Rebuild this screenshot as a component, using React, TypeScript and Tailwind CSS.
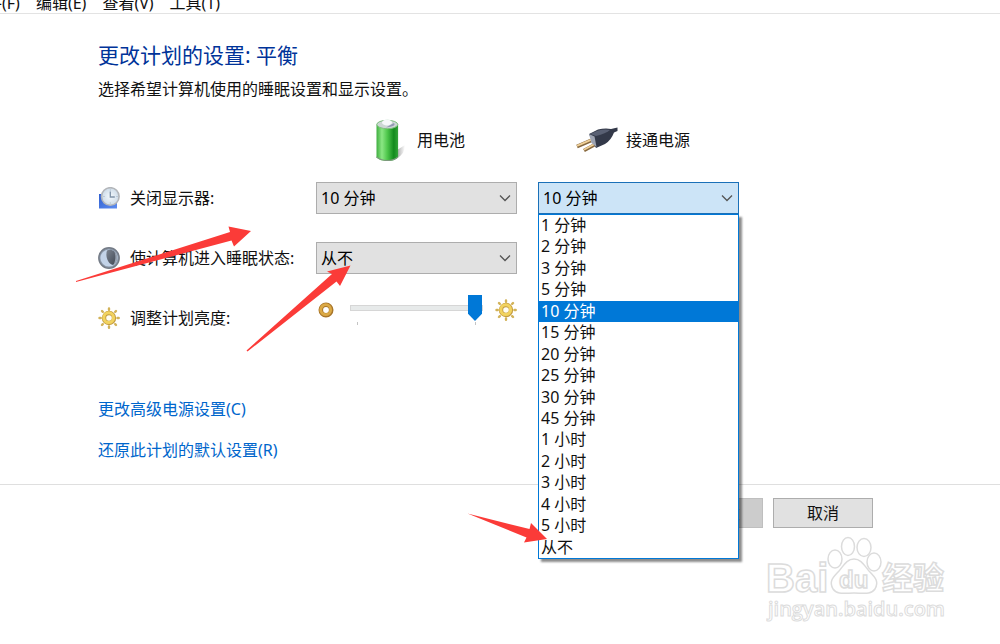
import { useState } from "react";

const TIMEOUTS = [
  "1 分钟",
  "2 分钟",
  "3 分钟",
  "5 分钟",
  "10 分钟",
  "15 分钟",
  "20 分钟",
  "25 分钟",
  "30 分钟",
  "45 分钟",
  "1 小时",
  "2 小时",
  "3 小时",
  "4 小时",
  "5 小时",
  "从不",
];

const MENUS = ["文件(F)", "编辑(E)", "查看(V)", "工具(T)"];

function ClockIcon() {
  return (
    <svg viewBox="0 0 22 22" className="size-[22px] shrink-0" aria-hidden="true">
      <defs>
        <linearGradient id="screen" x1="0" y1="0" x2="1" y2="1">
          <stop offset="0" stopColor="#2f5fd0" />
          <stop offset="1" stopColor="#5d8df0" />
        </linearGradient>
        <radialGradient id="dial">
          <stop offset="0" stopColor="#f4f9fc" />
          <stop offset="1" stopColor="#cddbe8" />
        </radialGradient>
      </defs>
      <path d="M1 7h18v14.500H1z" fill="url(#screen)" />
      <circle cx="12.300" cy="9.500" r="8.800" fill="url(#dial)" stroke="#b3b6ba" strokeWidth="1.600" />
      <path d="M12.300 4.500v5.500h4.500" fill="none" stroke="#8093a8" strokeWidth="1.300" />
      <path d="M12.300 2.500v1M12.300 15.500v1M5.500 9.500h1M18.500 9.500h1" stroke="#a3b3c4" />
    </svg>
  );
}

function MoonIcon() {
  return (
    <svg viewBox="0 0 22 22" className="size-[22px] shrink-0" aria-hidden="true">
      <defs>
        <linearGradient id="night" x1="0" y1="0" x2="1" y2="1">
          <stop offset="0" stopColor="#7c8490" />
          <stop offset="1" stopColor="#3f4652" />
        </linearGradient>
      </defs>
      <circle cx="11" cy="11" r="10.200" fill="#8b98a9" stroke="#747b86" strokeWidth="1.400" />
      <circle cx="11" cy="11" r="8.600" fill="#c3d3e8" />
      <path d="M9 3.500c4-2 8.500.500 9.500 5 .800 4-1 7.500-3.500 9.500C10 17 7 9.500 9 3.500z" fill="url(#night)" />
      <path d="M16.500 5a8 8 0 0 1-1 13c2-4 2.500-9 1-13z" fill="#98a2b0" />
    </svg>
  );
}

function SunIcon() {
  return (
    <svg viewBox="0 0 22 22" className="size-[22px] shrink-0" aria-hidden="true">
      <g stroke="#d2b258" strokeWidth="2.400" strokeLinecap="round">
        <path d="M11 1.500v1.200M11 19.500v1.200M1.500 11h1.200M19.500 11h1.200" />
        <path d="M4 4l.800.800M17.200 17.200l.800.800M4 18l.800-.800M17.200 4.800l.800-.800" />
      </g>
      <circle cx="11" cy="11" r="5" fill="#fffdf2" stroke="#c49d42" strokeWidth="4.400" />
      <circle cx="10.700" cy="10.700" r="4.900" fill="none" stroke="#f2d35f" strokeWidth="3" />
    </svg>
  );
}

function DimIcon() {
  return (
    <svg viewBox="0 0 16 16" className="size-4 shrink-0" aria-hidden="true">
      <circle cx="8" cy="8" r="5.200" fill="#fff" stroke="#a8752a" strokeWidth="4.600" />
      <circle cx="7.700" cy="7.700" r="5" fill="none" stroke="#dba945" strokeWidth="2.800" />
    </svg>
  );
}

function BatteryIcon() {
  return (
    <svg viewBox="0 0 30 42" className="h-[42px] w-[30px] shrink-0" aria-hidden="true">
      <defs>
        <linearGradient id="cell" x1="0" x2="1">
          <stop offset="0" stopColor="#3fae3f" />
          <stop offset=".25" stopColor="#8be784" />
          <stop offset=".5" stopColor="#4fc74c" />
          <stop offset=".8" stopColor="#128a1c" />
          <stop offset="1" stopColor="#35a53a" />
        </linearGradient>
        <linearGradient id="shade" x1="0" x2="1">
          <stop offset="0" stopColor="#888" />
          <stop offset="1" stopColor="#fff" />
        </linearGradient>
      </defs>
      <path d="M22 31l8-5q0 9-8 13z" fill="url(#shade)" opacity=".7" />
      <path d="M1.500 5.500v33q4 3.500 10.800 3.500t10.800-3.500v-33z" fill="url(#cell)" />
      <path d="M1.500 38q4 3.500 10.800 3.500T23 38" fill="none" stroke="#7d9a7d" strokeWidth="1.200" />
      <ellipse cx="12.300" cy="5.500" rx="10.500" ry="4.200" fill="#ccd6d4" stroke="#7fbf7f" />
      <ellipse cx="12" cy="3.500" rx="5" ry="3" fill="#f6f8fa" />
      <path d="M11 8.500l8-4.500q3 3-8 4.500z" fill="#9298b4" />
    </svg>
  );
}

function PlugIcon() {
  return (
    <svg viewBox="0 0 42 26" className="h-[26px] w-[42px] shrink-0" aria-hidden="true">
      <path d="M1 19.500l14-6M8 23.500l12-6.500" stroke="#86683f" strokeWidth="3.600" />
      <path d="M1 18.800l14-6M8 22.800l12-6.500" stroke="#efcf97" strokeWidth="1.800" />
      <path d="M13 7l9-4.500q7-1.500 13-.500l6.500-1.500v3.500l-3.500 1.500q-3 8-9 11.500l-9 4q-4-7-7-14z" fill="#333949" />
      <path d="M13 7l5.500 2.500 2 10.500-5-4z" fill="#9da3b1" />
      <path d="M14 7l8-3.500q7-1.500 12-.500-4 3.500-14 6z" fill="#596073" />
    </svg>
  );
}

function Chevron() {
  return (
    <svg viewBox="0 0 12 8" className="pointer-events-none absolute top-3 right-[6px] h-2 w-3" aria-hidden="true">
      <path d="M1 1.500l5 5 5-5" fill="none" stroke="#555" strokeWidth="1.300" />
    </svg>
  );
}

function TimeoutSelect({ label, value }: { label: string; value: string }) {
  return (
    <div className="relative">
      <select
        aria-label={label}
        defaultValue={value}
        className="h-8 w-full appearance-none border border-[#adadad] bg-[#e1e1e1] px-1 text-black outline-none"
      >
        {TIMEOUTS.map((item) => (
          <option key={item}>{item}</option>
        ))}
      </select>
      <Chevron />
    </div>
  );
}

function OpenTimeoutSelect({ label }: { label: string }) {
  const [open, setOpen] = useState(true);
  const [value, setValue] = useState("10 分钟");

  return (
    <div className="relative">
      <select
        aria-label={label}
        value={value}
        onChange={(event) => setValue(event.target.value)}
        onMouseDown={(event) => {
          event.preventDefault();
          setOpen(!open);
        }}
        className="h-8 w-full appearance-none border border-[#1a70b8] bg-[#cce4f7] px-1 text-black outline-none"
      >
        {TIMEOUTS.map((item) => (
          <option key={item}>{item}</option>
        ))}
      </select>
      <Chevron />
      {open && (
        <ul
          role="listbox"
          aria-label={label}
          className="absolute top-8 left-0 z-10 grid h-[345px] w-full auto-rows-fr border border-[#0078d7] bg-white shadow-[3px_3px_2px_rgba(0,0,0,0.45)]"
        >
          {TIMEOUTS.map((item) => (
            <li
              key={item}
              role="option"
              aria-selected={item === value}
              onClick={() => {
                setValue(item);
                setOpen(false);
              }}
              className={
                item === value
                  ? "bg-[#0078d7] px-[2px] leading-[21px] text-white"
                  : "px-[2px] leading-[21px]"
              }
            >
              {item}
            </li>
          ))}
        </ul>
      )}
    </div>
  );
}

function BrightnessSlider() {
  return (
    <div className="flex h-8 items-center pb-4 pl-[2px]">
      <DimIcon />
      <div className="mr-3 ml-4 w-[133px] shrink-0">
        <input
          id="brightness"
          type="range"
          min={0}
          max={100}
          defaultValue={100}
          className="block h-[26px] w-full appearance-none bg-transparent [&::-webkit-slider-runnable-track]:h-[6px] [&::-webkit-slider-runnable-track]:border [&::-webkit-slider-runnable-track]:border-[#d6d6d6] [&::-webkit-slider-runnable-track]:bg-[#e7eaea] [&::-webkit-slider-thumb]:-mt-[11px] [&::-webkit-slider-thumb]:h-[26px] [&::-webkit-slider-thumb]:w-[14px] [&::-webkit-slider-thumb]:appearance-none [&::-webkit-slider-thumb]:bg-[#0078d7] [&::-webkit-slider-thumb]:[clip-path:polygon(0_0,100%_0,100%_72%,50%_100%,0_72%)]"
        />
        <div className="mt-px flex justify-between px-[7px]">
          <span className="h-[3px] w-px bg-[#c4c4c4]" />
          <span className="h-[3px] w-px bg-[#c4c4c4]" />
        </div>
      </div>
      <SunIcon />
    </div>
  );
}

function Watermark() {
  return (
    <svg
      viewBox="0 0 184 90"
      className="pointer-events-none absolute top-[50px] right-[50px] h-[90px] w-[184px]"
      fill="#fff"
      stroke="#dcdcdc"
      strokeWidth="1.500"
    >
      <text x="0" y="57" fontSize="40" fontWeight="700" fontFamily="Liberation Sans, sans-serif">
        Bai
      </text>
      <text x="116" y="54" fontSize="31" fontWeight="700" fontFamily="Noto Sans CJK SC, sans-serif">
        经验
      </text>
      <ellipse cx="69" cy="24" rx="7" ry="9" />
      <ellipse cx="82" cy="11.500" rx="6.500" ry="9" />
      <ellipse cx="98" cy="12.500" rx="7" ry="9" />
      <ellipse cx="108" cy="27" rx="7" ry="9" />
      <path d="M88 24c-7 0-10 6-15 12-7 7-10 11-6 18 4 6 12 4 21 4s17 2 21-4c4-7 1-11-6-18-5-6-8-12-15-12z" />
      <text x="73" y="53" fontSize="24" fontWeight="700" fontFamily="Liberation Sans, sans-serif">
        du
      </text>
      <text x="2" y="81" fontSize="20" fontWeight="600" fontFamily="Open Sans, sans-serif" strokeWidth="1">
        jingyan.baidu.com
      </text>
    </svg>
  );
}

function Arrows() {
  return (
    <svg
      viewBox="0 0 1000 644"
      className="pointer-events-none absolute top-0 left-0 z-20 h-[644px] w-[1000px]"
      fill="#fb3b38"
      aria-hidden="true"
    >
      <path d="M76 281L230 232 228.500 226.500 251 231 234 246.500 231.500 240.500 76 282z" />
      <path d="M246.500 350.500L332 274 327 271.500 350.500 265.500 340 286 336.500 281.500 247.500 351.500z" />
      <path d="M467.500 513.500L529.500 529 531 523 547 539 524 542.500 526.500 537.500z" />
    </svg>
  );
}

export default function App() {
  return (
    <div className="relative min-h-screen overflow-hidden bg-white font-['Noto_Sans','Noto_Sans_CJK_SC',sans-serif] text-[16px] text-[#111]">
      <nav className="flex h-[14px] items-end gap-4 overflow-hidden border-b border-[#e3e3e3]">
        {MENUS.map((menu) => (
          <button key={menu} type="button" className="shrink-0 leading-5 first:-ml-[30px]">
            {menu}
          </button>
        ))}
      </nav>

      <main className="border-b border-[#dfdfdf] pt-[27px] pb-[22px] pl-[98px]">
        <h1 className="text-[21px] leading-7 text-[#003399]">更改计划的设置: 平衡</h1>
        <p className="mt-2 leading-6">选择希望计算机使用的睡眠设置和显示设置。</p>

        <div className="mt-[18px] grid h-[42px] grid-cols-[197px_201px_201px] gap-x-[21px]">
          <div className="col-start-2 flex items-center gap-3 pl-[59px]">
            <BatteryIcon />
            用电池
          </div>
          <div className="flex items-center gap-2 pl-[38px]">
            <PlugIcon />
            接通电源
          </div>
        </div>

        <div className="mt-[21px] grid auto-rows-[32px] grid-cols-[197px_201px_201px] gap-x-[21px] gap-y-7">
          <div className="flex items-center gap-[10px] whitespace-nowrap">
            <ClockIcon />
            关闭显示器:
          </div>
          <TimeoutSelect label="关闭显示器 用电池" value="10 分钟" />
          <OpenTimeoutSelect label="关闭显示器 接通电源" />

          <div className="flex items-center gap-[10px] whitespace-nowrap">
            <MoonIcon />
            使计算机进入睡眠状态:
          </div>
          <TimeoutSelect label="使计算机进入睡眠状态 用电池" value="从不" />

          <label htmlFor="brightness" className="col-start-1 flex items-center gap-[10px] whitespace-nowrap">
            <SunIcon />
            调整计划亮度:
          </label>
          <BrightnessSlider />
        </div>

        <div className="mt-[63px] flex flex-col items-start gap-[17px] leading-6 text-[#0066cc]">
          <a href="#advanced">更改高级电源设置(C)</a>
          <a href="#restore">还原此计划的默认设置(R)</a>
        </div>
      </main>

      <footer className="relative flex h-[150px] items-start justify-end gap-[10px] pt-[13px] pr-[127px]">
        <button type="button" disabled className="h-[30px] w-[110px] border border-[#bfbfbf] bg-[#cccccc] text-[#838383]">
          保存修改
        </button>
        <button type="button" className="h-[30px] w-[100px] border border-[#adadad] bg-[#e1e1e1]">
          取消
        </button>
        <Watermark />
      </footer>

      <Arrows />
    </div>
  );
}
